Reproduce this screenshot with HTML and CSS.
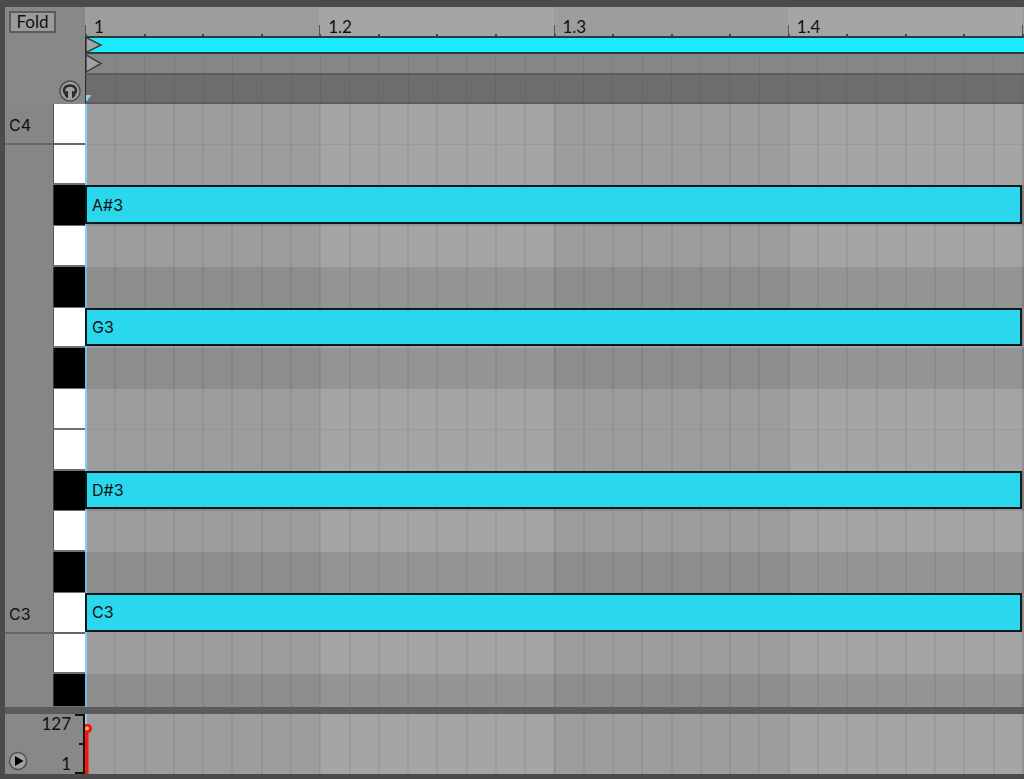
FILE: index.html
```html
<!DOCTYPE html>
<html lang="en">
<head>
    <meta charset="UTF-8">
    <meta name="viewport" content="width=device-width, initial-scale=1.0">
    <title>MIDI Note Editor</title>
    <link rel="stylesheet" href="styles.css">
</head>
<body>
    <main class="editor">

        <!-- Top left controls -->
        <div class="controls">
            <button class="fold" type="button">Fold</button>
            <button class="round preview" type="button" aria-label="Preview">
                <svg width="22" height="22" viewBox="0 0 22 22">
                    <circle cx="11" cy="11" r="10" fill="#a0a0a0" stroke="#505050" stroke-width="1.5"/>
                    <path d="M6 13.500C3.500 9 6.500 5.500 11 5.500S18.500 9 16 13.500" fill="none" stroke="#2b2b2b" stroke-width="2.500"/>
                    <path d="M5 12L9 11V18H8Q5.500 16.500 5 13Z M17 12L13 11V18H14Q16.500 16.500 17 13Z" fill="#2b2b2b"/>
                </svg>
            </button>
        </div>

        <!-- Ruler, loop brace and scrub area -->
        <div class="timeline">
            <div class="ruler">
                <span>1</span>
                <span>1.2</span>
                <span>1.3</span>
                <span>1.4</span>
            </div>
            <div class="loop">
                <svg class="marker" width="17" height="16" viewBox="0 0 17 16">
                    <path d="M0 0.500L15 8L0 15.500Z" fill="#a3a3a3" stroke="#3c3c3c" stroke-width="1.500"/>
                </svg>
            </div>
            <div class="start">
                <svg class="marker" width="17" height="19" viewBox="0 0 17 19">
                    <path d="M0 1L15 9.500L0 18Z" fill="#a3a3a3" stroke="#3c3c3c" stroke-width="1.500"/>
                </svg>
            </div>
            <div class="scrub">
                <svg class="marker" width="8" height="7" viewBox="0 0 8 7">
                    <path d="M0 0H5.500L1 6H0Z" fill="#86d0f5"/>
                </svg>
            </div>
        </div>

        <!-- Piano keys -->
        <div class="keyboard">
            <div class="key octave">C4</div>
            <div class="key"></div>
            <div class="key black"></div>
            <div class="key"></div>
            <div class="key black"></div>
            <div class="key"></div>
            <div class="key black"></div>
            <div class="key"></div>
            <div class="key"></div>
            <div class="key black"></div>
            <div class="key"></div>
            <div class="key black"></div>
            <div class="key octave">C3</div>
            <div class="key"></div>
            <div class="key black"></div>
        </div>

        <!-- Notes -->
        <div class="roll beats">
            <div class="row divided"></div>
            <div class="row"></div>
            <div class="row dark"><div class="note">A#3</div></div>
            <div class="row"></div>
            <div class="row dark"></div>
            <div class="row"><div class="note">G3</div></div>
            <div class="row dark"></div>
            <div class="row divided"></div>
            <div class="row"></div>
            <div class="row dark"><div class="note">D#3</div></div>
            <div class="row"></div>
            <div class="row dark"></div>
            <div class="row"><div class="note">C3</div></div>
            <div class="row"></div>
            <div class="row dark"></div>
        </div>

        <div class="splitter"></div>

        <!-- Velocity lane -->
        <div class="velocity-scale">
            <button class="round" type="button" aria-label="Show lanes">
                <svg width="20" height="20" viewBox="0 0 20 20">
                    <circle cx="10" cy="10" r="8.500" fill="#a0a0a0" stroke="#505050" stroke-width="1.500"/>
                    <path d="M7 5L15.500 10L7 15Z" fill="#000"/>
                </svg>
            </button>
            <div class="range">
                <span>127</span>
                <span>1</span>
            </div>
            <div class="bracket"></div>
        </div>
        <div class="velocity beats">
            <svg class="stem" width="7" height="50" viewBox="0 0 7 50">
                <path d="M0 5H3.500V50H0Z" fill="#ff1200"/>
                <circle cx="2" cy="4.500" r="3.500" fill="#d8b0aa" stroke="#ff1200" stroke-width="3"/>
            </svg>
        </div>
    </main>
</body>
</html>
```

FILE: styles.css
```css
* {
    box-sizing: border-box;
}

body {
    margin: 0;
    background-color: #4b4b4b;
    color: #111;
    font-family: Lato, sans-serif;
    font-size: 17px;
    line-height: 20px;
}

/* --- Overall grid --- */
.editor {
    display: grid;
    grid-template-columns: 80px 1fr;
    grid-template-rows: 97px 1fr 7px 60px;
    height: 100vh;
    padding: 7px 0 5px 5px;
    overflow: hidden;
}

button {
    padding: 0;
    color: inherit;
    font: inherit;
    cursor: pointer;
}

.round {
    border: 0;
    background: none;
}

.round svg {
    display: block;
}

/* --- Top left controls --- */
.controls {
    display: flex;
    flex-direction: column;
    justify-content: space-between;
    padding: 4px 4px 2px;
    background-color: #888;
}

.fold {
    align-self: flex-start;
    width: 47px;
    height: 22px;
    border: 2px solid #5c5c5c;
    background-color: #9b9b9b;
    line-height: 18px;
}

.preview {
    align-self: flex-end;
}

/* --- Beat shading and grid lines --- */
.beats,
.ruler {
    --step: calc((100% - 2px) / 32);
    --beat: calc((100% - 2px) / 4);
    --shade: repeating-linear-gradient(90deg, #9d9d9d 0 var(--beat), #a5a5a5 0 calc(var(--beat) * 2));
}

.beats {
    background:
        linear-gradient(#86d0f5, #86d0f5) 0 0 / 2px 100% no-repeat,
        repeating-linear-gradient(90deg, rgba(0, 0, 0, 0.06) 0 1px, transparent 0 var(--beat)) 0 0 no-repeat,
        repeating-linear-gradient(90deg, rgba(0, 0, 0, 0.06) 0 2px, transparent 0 var(--step)) 0 0 no-repeat,
        var(--shade);
}

/* --- Timeline --- */
.timeline {
    display: grid;
    grid-template-rows: 29px 18px 21px 29px;
}

.ruler {
    display: grid;
    grid-template-columns: repeat(4, 1fr);
    padding: 10px 2px 0 0;
    background:
        repeating-linear-gradient(90deg, #555 0 1px, transparent 0 var(--beat)) 0 100% / 100% 11px no-repeat,
        repeating-linear-gradient(90deg, #444 0 2px, transparent 0 calc(var(--step) * 2)) 0 100% / 100% 2px no-repeat,
        var(--shade);
}

.ruler span {
    padding-left: 9px;
}

.marker {
    display: block;
}

.loop,
.start,
.scrub {
    --step: calc((100% - 2px) / 32);
    border-left: 1px solid #2c2c2c;
}

.loop {
    border-top: 2px solid #2c3a3c;
    border-bottom: 2px solid #2c3a3c;
    background-color: #1bebff;
}

.loop .marker {
    margin-top: -1px;
}

.start {
    border-bottom: 2px solid #5c5c5c;
    background: repeating-linear-gradient(90deg, #7b7b7b 0 1px, #868686 0 var(--step));
}

.scrub {
    display: flex;
    align-items: flex-end;
    border-bottom: 2px solid #5c5c5c;
    background: repeating-linear-gradient(90deg, #666 0 1px, #6d6d6d 0 var(--step));
}

/* --- Keyboard and note rows share the same row heights --- */
.keyboard,
.roll {
    display: grid;
    grid-template-rows: repeat(14, 5fr) 4fr;
    min-height: 0;
    font-family: Inter, sans-serif;
    font-size: 16px;
}

.keyboard {
    background-color: #868686;
}

.key {
    display: grid;
    grid-template-columns: 48px 1fr;
    align-items: center;
    padding-left: 4px;
    padding-top: 4px;
    border-bottom: 2px solid #777;
    background: linear-gradient(90deg, #868686 48px, #555 0 49px, #fff 0);
}

.key:not(.octave) {
    border-image: linear-gradient(90deg, #868686 48px, #707070 0) 2;
}

.key.octave {
    border-bottom: 2px solid #666;
}

.key.black {
    border-bottom-width: 1px;
    background: linear-gradient(90deg, #868686 48px, #333 0 49px, #000 0);
}

.row {
    min-height: 0;
    padding: 0 2px 2px 0;
}

.row.dark {
    background-color: rgba(0, 0, 0, 0.1);
}

.row.divided {
    border-bottom: 1px solid rgba(0, 0, 0, 0.05);
}

.note {
    display: flex;
    align-items: center;
    height: 100%;
    padding-left: 5px;
    border: 2px solid #061a1d;
    background-color: #2ad7ec;
}

/* --- Velocity lane --- */
.splitter {
    grid-column: 1 / -1;
    background-color: #5b5b5b;
}

.velocity-scale {
    display: flex;
    align-items: flex-end;
    background-color: #888;
}

.velocity-scale .round {
    margin: 0 0 3px 3px;
}

.range {
    display: flex;
    flex: 1;
    flex-direction: column;
    justify-content: space-between;
    align-self: stretch;
    padding-right: 4px;
    text-align: right;
}

.bracket {
    width: 10px;
    height: 60px;
    border: solid #111;
    border-width: 2px 2px 2px 0;
    background: linear-gradient(#111, #111) 100% 50% / 4px 2px no-repeat;
}

.velocity {
    display: flex;
    align-items: flex-end;
}
```
